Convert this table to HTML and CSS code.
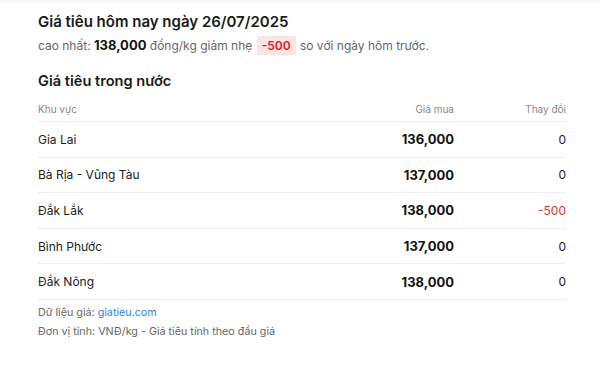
FILE: index.html
```html
<!DOCTYPE html>
<html lang="vi">
<head>
<meta charset="utf-8">
<link rel="stylesheet" href="styles.css">
</head>
<body>
<div class="page">
  <h1 class="title">Giá tiêu hôm nay ngày 26/07/2025</h1>
  <p class="summary">cao nhất: <b class="hi">138,000</b> đồng/kg giảm nhẹ <span class="badge">-500</span> so với ngày hôm trước.</p>
  <h2 class="section">Giá tiêu trong nước</h2>
  <table class="prices">
    <thead>
      <tr><th class="c-area">Khu vực</th><th class="c-price">Giá mua</th><th class="c-chg">Thay đổi</th></tr>
    </thead>
    <tbody>
      <tr><td class="c-area">Gia Lai</td><td class="c-price">136,000</td><td class="c-chg">0</td></tr>
      <tr><td class="c-area">Bà Rịa - Vũng Tàu</td><td class="c-price">137,000</td><td class="c-chg">0</td></tr>
      <tr><td class="c-area">Đắk Lắk</td><td class="c-price">138,000</td><td class="c-chg down">-500</td></tr>
      <tr><td class="c-area">Bình Phước</td><td class="c-price">137,000</td><td class="c-chg">0</td></tr>
      <tr><td class="c-area">Đắk Nông</td><td class="c-price">138,000</td><td class="c-chg">0</td></tr>
    </tbody>
  </table>
  <p class="note">Dữ liệu giá: <a class="link" href="#">giatieu.com</a></p>
  <p class="note">Đơn vị tính: VNĐ/kg - Giá tiêu tính theo đầu giá</p>
</div>
</body>
</html>
```
FILE: styles.css
```css
html, body {
  margin: 0;
  padding: 0;
  background: #fff;
}
body {
  font-family: Inter, "Noto Sans", sans-serif;
  color: #222;
  box-shadow: inset 0 4px 4px -3px rgba(0,0,0,0.06);
  min-height: 377px;
}
.page {
  padding: 12px 34px 0 38px;
}
.title {
  margin: 0;
  font-size: 15px;
  font-weight: 600;
  line-height: 20px;
  color: #1a1a1a;
}
.summary {
  margin: 3px 0 0;
  font-size: 12px;
  line-height: 20px;
  color: #666;
}
.hi {
  font-weight: 700;
  font-size: 13px;
  color: #111;
}
.badge {
  display: inline-block;
  background: #fde4e4;
  color: #e8141b;
  font-weight: 600;
  font-size: 12px;
  padding: 0 5px;
  border-radius: 2px;
  line-height: 19px;
  margin: 0 1px;
}
.section {
  margin: 15px 0 0;
  font-size: 14.6px;
  font-weight: 600;
  line-height: 20px;
  color: #1a1a1a;
}
.prices {
  width: 100%;
  border-collapse: collapse;
  margin-top: 6px;
}
.prices th {
  font-size: 10px;
  font-weight: 400;
  color: #888;
  height: 24px;
  padding: 0;
  border-bottom: 1px solid #ececec;
  vertical-align: middle;
}
.prices td {
  font-size: 12px;
  height: 34.6px;
  padding: 0;
  border-bottom: 1px solid #ececec;
  color: #222;
}
.c-area { text-align: left; }
.c-price { text-align: right; width: 120px; }
.c-chg { text-align: right; width: 112px; }
.prices td.c-price {
  font-weight: 700;
  font-size: 13px;
  color: #111;
}
.prices td.down { color: #e03131; }
.note {
  margin: 0;
  font-size: 10.75px;
  line-height: 19px;
  color: #666;
}
.prices + .note { margin-top: 3px; }
.link {
  color: #2f7fe0;
  text-decoration: none;
}
```
